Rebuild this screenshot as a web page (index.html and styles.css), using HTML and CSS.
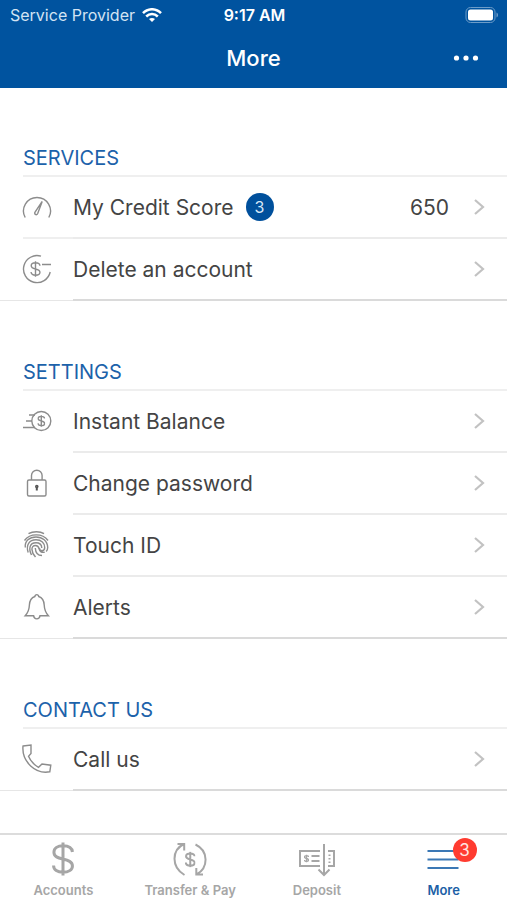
FILE: index.html
```
<!DOCTYPE html>
<html lang="en">

<head>
  <meta charset="UTF-8">
  <meta name="viewport" content="width=device-width, initial-scale=1.0">
  <title>More</title>
  <link rel="stylesheet" href="styles.css">
</head>

<body>

  <!-- shared symbols -->
  <svg class="symbols" aria-hidden="true">
    <symbol id="dollar" viewBox="0 0 12 18">
      <path vector-effect="non-scaling-stroke" d="M11 5.3C10.8 3.2 8.8 2 6 2S1.2 3.3 1.2 5.4C1.2 7.8 3.3 8.4 6 9s5 1.3 5 3.7C11 14.8 8.9 16 6 16s-5-1.3-5-3.5M6 .2v17.6"/>
    </symbol>
    <symbol id="chevron" viewBox="0 0 12 18">
      <path d="M2 2l8 7-8 7"/>
    </symbol>
  </svg>

  <header class="header">
    <div class="status-bar">
      <div class="carrier">
        <span>Service Provider</span>
        <svg class="wifi" viewBox="0 0 20 14" aria-hidden="true">
          <path d="M1 5.2C6-.1 14-.1 19 5.2M4.2 8.5c3.4-3.4 8.2-3.4 11.6 0"/>
          <path class="solid" d="M10 14l-3-3c1.7-1.5 4.3-1.5 6 0z"/>
        </svg>
      </div>
      <span class="time">9:17 AM</span>
      <svg class="battery" viewBox="0 0 34 16" aria-hidden="true">
        <rect class="case" x="1" y=".5" width="29" height="15" rx="4.5"/>
        <rect class="charge" x="3" y="2.5" width="25" height="11" rx="2.5"/>
        <path class="cap" d="M31.5 5.5c2 .8 2 4.2 0 5z"/>
      </svg>
    </div>
    <div class="title-bar">
      <h1>More</h1>
      <button class="menu-button" aria-label="Options">
        <svg viewBox="0 0 26 6" aria-hidden="true">
          <circle cx="3.5" cy="3" r="2.6"/>
          <circle cx="13" cy="3" r="2.6"/>
          <circle cx="22.5" cy="3" r="2.6"/>
        </svg>
      </button>
    </div>
  </header>

  <main class="content">

    <section>
      <h2>Services</h2>
      <ul class="list">
        <li>
          <a class="row wide-line" href="#score">
            <span class="row-icon">
              <svg viewBox="0 0 30 30"><path d="M3.2 25.5A13.5 13.5 0 1 1 26.8 25.5M20.2 9.5l-7 10.3c-1.6 2.3 1.3 4.2 2.5 1.7z"/></svg>
            </span>
            <span class="row-body">
              <span>My Credit Score</span>
              <span class="count">3</span>
              <span class="value">650</span>
              <svg class="chevron"><use href="#chevron"/></svg>
            </span>
          </a>
        </li>
        <li>
          <a class="row" href="#delete">
            <span class="row-icon">
              <svg viewBox="0 0 30 30"><path d="M19 2.2A13.5 13.5 0 1 0 28.2 18M20 10.5h9"/><use href="#dollar" x="8" y="7" width="11" height="16"/></svg>
            </span>
            <span class="row-body">
              <span>Delete an account</span>
              <svg class="chevron"><use href="#chevron"/></svg>
            </span>
          </a>
        </li>
      </ul>
    </section>

    <section>
      <h2>Settings</h2>
      <ul class="list">
        <li>
          <a class="row" href="#balance">
            <span class="row-icon">
              <svg viewBox="0 0 30 30"><circle cx="19.3" cy="15" r="9.5"/><path d="M7 9h6M4 15h6M1 21.5h12"/><use href="#dollar" x="15.3" y="9" width="8" height="12"/></svg>
            </span>
            <span class="row-body">
              <span>Instant Balance</span>
              <svg class="chevron"><use href="#chevron"/></svg>
            </span>
          </a>
        </li>
        <li>
          <a class="row" href="#password">
            <span class="row-icon">
              <svg viewBox="0 0 30 30"><rect x="5.5" y="12" width="18.5" height="16" rx="1.5"/><path d="M9.5 12V7.5a5.3 5.3 0 0 1 10.6 0V12"/><path class="keyhole" d="M14.8 19v3.5"/><circle class="keyhole" cx="14.8" cy="18.5" r=".8"/></svg>
            </span>
            <span class="row-body">
              <span>Change password</span>
              <svg class="chevron"><use href="#chevron"/></svg>
            </span>
          </a>
        </li>
        <li>
          <a class="row" href="#touch">
            <span class="row-icon">
              <svg viewBox="0 0 30 30"><path d="M6.5 3.7C11 1 18 1 22 3.7M2.5 10.5C8 3 20.5 3 26 10.5M3.3 17.5C2.5 11 7.5 7 14 7s11.5 4 11.7 10.5c0 2-.7 3.2-1.5 4M6.2 22.5c-2.5-7.5 1-12.7 7.8-12.7 5.5 0 8.7 3.5 8.7 7.7 0 4.2-5 4.3-5.3.5M9.5 25c-3-6-2.2-12.3 4.5-12.3 3.5 0 5.7 2.3 5.8 5.3M13.5 27c-4.5-5-5-11.5 0-11.5 2.8 0 3.2 1.5 3.7 3.5.7 2.7 2.5 3.7 5.5 3.3M13.3 18c.2 4.5 2.7 7.5 6.7 7.5"/></svg>
            </span>
            <span class="row-body">
              <span>Touch ID</span>
              <svg class="chevron"><use href="#chevron"/></svg>
            </span>
          </a>
        </li>
        <li>
          <a class="row" href="#alerts">
            <span class="row-icon">
              <svg viewBox="0 0 30 30"><path d="M12.9 4.500a1.900 1.900 0 1 1 3.800 0C20.500 5.800 22 8.500 22.200 13c.2 5 1 7.300 4.200 10.700H18c-.5 4.200-5.900 4.200-6.400 0H3.200C6.400 20.300 7.200 18 7.400 13c.2-4.500 1.700-7.200 5.500-8.500z"/></svg>
            </span>
            <span class="row-body">
              <span>Alerts</span>
              <svg class="chevron"><use href="#chevron"/></svg>
            </span>
          </a>
        </li>
      </ul>
    </section>

    <section>
      <h2>Contact us</h2>
      <ul class="list">
        <li>
          <a class="row" href="#call">
            <span class="row-icon">
              <svg viewBox="0 0 30 30"><path d="M1 2l8-1v8.500l-2.500 2.800c2 4.800 5.500 8.500 10 11l3.500-3.300 8.800 1.200-1 6.600C14 30.500-.5 18 1 2z"/></svg>
            </span>
            <span class="row-body">
              <span>Call us</span>
              <svg class="chevron"><use href="#chevron"/></svg>
            </span>
          </a>
        </li>
      </ul>
    </section>

  </main>

  <nav class="tab-bar">
    <a class="tab" href="#accounts">
      <svg class="thick" viewBox="0 0 36 36"><use href="#dollar" x="6.5" y="1" width="23" height="34"/></svg>
      <span>Accounts</span>
    </a>
    <a class="tab" href="#transfer">
      <svg viewBox="0 0 36 36"><path d="M12.500 34C-1 26-.5 9 12 3M5.500 3H12.200v6.500M23.500 3.500C37 10 36.500 27 24.500 33.500M31 33.500h-6.700V27"/><use href="#dollar" x="13" y="10.500" width="10.500" height="16"/></svg>
      <span>Transfer &amp; Pay</span>
    </a>
    <a class="tab" href="#deposit">
      <svg viewBox="0 0 36 36"><path d="M21 10H1v15h20M29 10h6v15h-6M25 3v31M19.500 28.500L25 34l5.500-5.500M12.500 15h8M12.500 20h8M30.500 13.500v1.500M30.500 17v1.500M30.500 20.500V22"/><use class="small-dollar" href="#dollar" x="5" y="13" width="5" height="9"/></svg>
      <span>Deposit</span>
    </a>
    <a class="tab active" href="#more">
      <span class="tab-icon">
        <svg viewBox="0 0 36 36"><path d="M1.500 10h31M1.500 18.500h31M1.500 27h31"/></svg>
        <span class="tab-badge">3</span>
      </span>
      <span>More</span>
    </a>
  </nav>

</body>

</html>
```
FILE: styles.css
```
body {
  margin: 0;
  height: 100vh;
  display: flex;
  flex-direction: column;
  background-color: #fff;
  color: #444;
  font-family: Inter, "Liberation Sans", sans-serif;
}

a {
  color: inherit;
  text-decoration: none;
}

svg {
  display: block;
  fill: none;
}

.symbols {
  position: absolute;
  width: 0;
  height: 0;
}

/* header */
.header {
  height: 88px;
  flex-shrink: 0;
  background-color: #00539f;
  color: #fff;
}

.status-bar,
.title-bar {
  display: grid;
  grid-template-columns: 1fr auto 1fr;
  align-items: center;
}

.status-bar {
  height: 30px;
  padding: 0 8px 0 10px;
  font-size: 16px;
}

.carrier {
  display: flex;
  align-items: center;
  gap: 7px;
  color: #d3e3f3;
}

.wifi {
  width: 20px;
  height: 14px;
  stroke: #fff;
  stroke-width: 2.5;
}

.wifi .solid {
  fill: #fff;
  stroke: none;
}

.time {
  font-weight: 600;
}

.battery {
  width: 34px;
  height: 16px;
  justify-self: end;
}

.battery .case {
  stroke: #6c9cc8;
}

.battery .charge {
  fill: #fff;
}

.battery .cap {
  fill: #6c9cc8;
}

.title-bar {
  height: 56px;
  padding: 0 20px;
}

h1 {
  grid-column: 2;
  margin: 0;
  font-size: 22px;
  font-weight: 500;
}

.menu-button {
  justify-self: end;
  padding: 8px;
  border: none;
  background: none;
  cursor: pointer;
}

.menu-button svg {
  width: 26px;
  height: 6px;
  fill: #fff;
}

/* list */
.content {
  flex: 1;
  overflow-y: auto;
}

h2 {
  margin: 0;
  padding: 57px 23px 4px;
  color: #1c62aa;
  font-size: 20px;
  font-weight: 400;
  line-height: 26px;
  text-transform: uppercase;
}

section + section h2 {
  padding-top: 58px;
}

.list {
  margin: 0;
  padding: 0;
  list-style: none;
}

.list::before {
  content: '';
  display: block;
  height: 2px;
  margin-left: 23px;
  background-color: #efefef;
}

.row {
  display: flex;
  height: 62px;
  font-size: 21px;
}

.row-icon {
  box-sizing: border-box;
  width: 73px;
  padding: 15px 0 0 22px;
}

.row-icon svg {
  width: 30px;
  height: 30px;
  stroke: #8c8c8c;
  stroke-width: 1.4;
}

.row-icon .keyhole {
  stroke: #555;
  stroke-width: 2;
}

.wide-line .row-icon {
  width: 50px;
  margin-left: 23px;
  padding-left: 0;
  border-bottom: 2px solid #efefef;
}

.wide-line .row-icon svg {
  margin-left: -1px;
}

.row-body {
  flex: 1;
  display: flex;
  align-items: center;
  padding-right: 22px;
  border-bottom: 2px solid #ebebeb;
}

.list li:last-child .row-icon {
  border-bottom: 1px solid #e6e6e6;
}

.list li:last-child .row-body {
  border-color: #dadada;
}

.count {
  width: 28px;
  height: 28px;
  margin-left: 12px;
  border-radius: 50%;
  background-color: #00509c;
  color: #d9e8f6;
  font-size: 16px;
  line-height: 28px;
  text-align: center;
}

.chevron {
  width: 12px;
  height: 18px;
  margin-left: auto;
  stroke: #c2c2c2;
  stroke-width: 2.2;
}

.value {
  margin-left: auto;
}

.value + .chevron {
  margin-left: 24px;
}

/* tab bar */
.tab-bar {
  display: grid;
  grid-template-columns: repeat(4, 1fr);
  flex-shrink: 0;
  height: 65px;
  border-top: 2px solid #dcdcdc;
}

.tab {
  display: flex;
  flex-direction: column;
  align-items: center;
  gap: 4px;
  padding-top: 6px;
  color: #a6a6a6;
  font-size: 13px;
  font-weight: 600;
  line-height: 18px;
}

.tab svg {
  width: 36px;
  height: 36px;
  stroke: #a6a6a6;
  stroke-width: 2;
}

.tab .thick {
  stroke-width: 3;
}

.tab .small-dollar {
  stroke-width: 1.3;
}

.tab.active {
  color: #1c5fa6;
}

.tab.active svg {
  stroke: #3b78b5;
}

.tab-icon {
  position: relative;
}

.tab-badge {
  position: absolute;
  top: -3px;
  right: -15px;
  width: 24px;
  height: 24px;
  border-radius: 50%;
  background-color: #ff3b30;
  color: #ffe3e0;
  font-size: 17px;
  font-weight: 400;
  line-height: 24px;
  text-align: center;
}
```
